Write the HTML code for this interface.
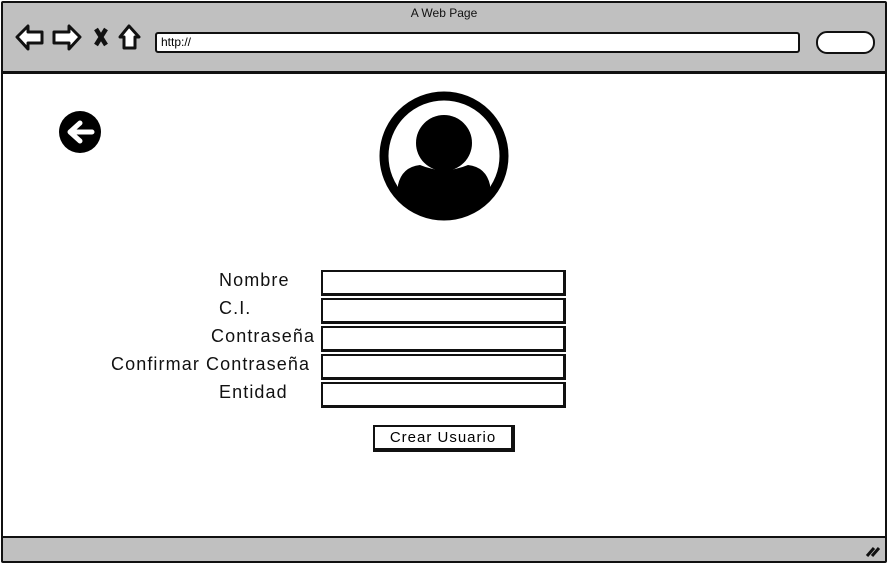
<!DOCTYPE html>
<html><head><style>
body{margin:0;width:888px;height:564px;overflow:hidden;background:#fff;font-family:"Liberation Sans",sans-serif;}
.frame{position:absolute;left:1px;top:1px;width:882px;height:558px;border:2px solid #111;border-radius:2px;}
.top{position:absolute;left:3px;top:3px;width:882px;height:68px;background:#c0c0c0;border-bottom:3px solid #111;}
.bot{position:absolute;left:3px;top:536px;width:882px;height:24px;background:#c0c0c0;border-top:2px solid #111;}
.title{position:absolute;top:6px;left:0;width:888px;text-align:center;font-size:12px;color:#111;}
.url{position:absolute;left:155px;top:32px;width:637px;height:17px;background:#fff;border:2px solid #111;border-radius:3px;font-size:12px;line-height:17px;padding-left:4px;box-sizing:content-box;}
.search{position:absolute;left:816px;top:31px;width:55px;height:19px;background:#fff;border:2px solid #111;border-radius:11px;}
.lbl{position:absolute;font-size:18px;letter-spacing:1.1px;color:#111;white-space:nowrap;}
.in{position:absolute;left:321px;width:240px;height:21px;border:2px solid #111;border-right-width:3px;border-bottom-width:3px;background:#fff;}
.btn{position:absolute;left:373px;top:425px;width:136px;height:21px;border:2px solid #111;border-right-width:4px;border-bottom-width:4px;background:#fff;font-size:15px;letter-spacing:1px;text-align:center;line-height:21px;}
</style></head><body>
<div class="top"></div>
<div class="bot"></div>
<div class="frame"></div>
<div class="title">A Web Page</div>
<svg style="position:absolute;left:0;top:0" width="888" height="564">
<g fill="#fff" stroke="#111" stroke-width="3" stroke-linejoin="round">
<path d="M17 37 L28 26 L28 32 L42 32 L42 43 L28 43 L28 49 Z"/>
<path d="M80 37 L69 26 L69 32 L54 32 L54 43 L69 43 L69 49 Z"/>
<path d="M129 26 L139 37 L135 37 L135 48 L124 48 L124 37 L120 37 Z"/>
</g>
<path d="M96 29 L106 45 M106 29 L96 45" stroke="#111" stroke-width="4.5"/>
<circle cx="825" cy="42" r="3.5" fill="none" stroke="#111" stroke-width="2"/><path d="M827 44 L830 47" stroke="#111" stroke-width="2"/>
<path d="M867 556 L874 548 M872 556 L879 548" stroke="#111" stroke-width="3"/>
<circle cx="80" cy="132" r="21" fill="#000"/>
<path d="M92 132 H72 M80 123 L70 132 L80 141" fill="none" stroke="#fff" stroke-width="5" stroke-linecap="round" stroke-linejoin="round"/>
<defs><clipPath id="c"><circle cx="444" cy="156" r="56"/></clipPath></defs>
<circle cx="444" cy="156" r="60" fill="#fff" stroke="#000" stroke-width="9"/>
<g clip-path="url(#c)"><path d="M396 240 L398 185 Q402 167 420 165 Q444 175 468 165 Q486 167 490 185 L492 240 Z" fill="#000"/></g>
<circle cx="444" cy="143" r="28" fill="#000"/>
</svg>
<div class="url">http://</div>
<div class="search"></div>
<div class="lbl" style="left:219px;top:270px">Nombre</div>
<div class="lbl" style="left:219px;top:298px">C.I.</div>
<div class="lbl" style="left:211px;top:326px">Contraseña</div>
<div class="lbl" style="left:111px;top:354px">Confirmar Contraseña</div>
<div class="lbl" style="left:219px;top:382px">Entidad</div>
<div class="in" style="top:270px"></div>
<div class="in" style="top:298px"></div>
<div class="in" style="top:326px"></div>
<div class="in" style="top:354px"></div>
<div class="in" style="top:382px"></div>
<div class="btn">Crear Usuario</div>
</body></html>
